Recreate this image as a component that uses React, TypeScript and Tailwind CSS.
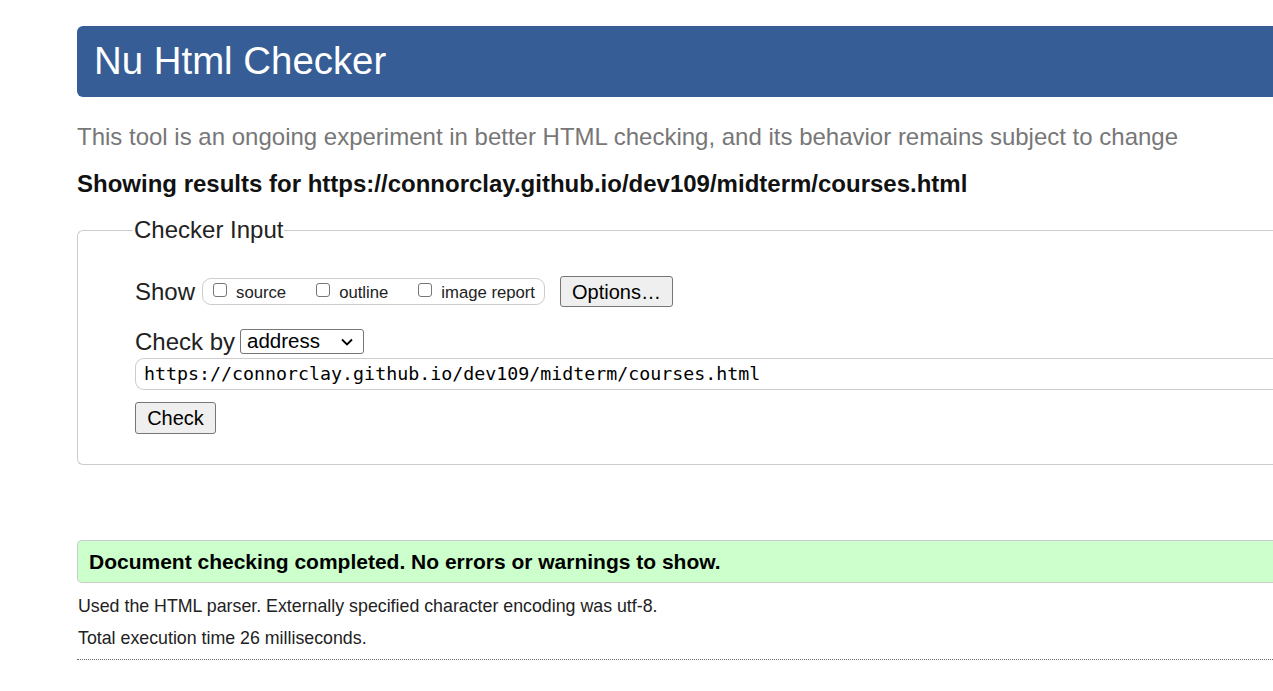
import React from 'react';

const sans = '[font-family:"Liberation_Sans",Arial,sans-serif]';

function Checkbox({ label }: { label: string }) {
  return (
    <label className="flex items-center">
      <span className="mb-[6px] block h-[14px] w-[14px] rounded-[3px] border border-[#767676] bg-white" />
      <span className="ml-[9px] text-[16.7px] leading-none text-[#222]">{label}</span>
    </label>
  );
}

export default function App() {
  return (
    <div className={`min-h-screen w-screen overflow-hidden bg-white text-[#111] ${sans}`}>
      <div className="ml-[77px] w-[1300px] pt-[26px]">
        <header className="flex h-[71px] items-center rounded-l-[6px] bg-[#365d95] pl-[17px]">
          <h1 className="text-[38.4px] font-normal leading-none text-white">Nu Html Checker</h1>
        </header>

        <p className="mt-[28px] text-[24px] leading-none text-[#777]">
          This tool is an ongoing experiment in better HTML checking, and its behavior remains subject to change
        </p>
        <p className="mt-[23px] text-[24px] font-bold leading-none text-[#111]">
          Showing results for https://connorclay.github.io/dev109/midterm/courses.html
        </p>

        <fieldset className="mt-[22px] rounded-l-[6px] border border-r-0 border-[#ccc] pb-[30px]">
          <legend className="ml-[55px] px-[1px] text-[24px] leading-none text-[#222]">Checker Input</legend>

          <div className="pl-[57px]">
            <div className="mt-[34px] flex items-center">
              <span className="text-[24px] leading-none text-[#222]">Show</span>
              <div className="ml-[7px] flex h-[27px] items-center gap-[30px] rounded-[9px] border border-[#ccc] pl-[10px] pr-[9px] pt-[3px]">
                <Checkbox label="source" />
                <Checkbox label="outline" />
                <Checkbox label="image report" />
              </div>
              <button className="ml-[15px] h-[31px] w-[113px] rounded-[3px] border border-[#767676] bg-[#efefef] text-[20px] leading-none text-black">
                Options…
              </button>
            </div>

            <div className="mt-[22px] flex items-center">
              <span className="text-[24px] leading-none text-[#222]">Check by</span>
              <div className="ml-[5px] flex h-[25px] w-[124px] items-center justify-between rounded-[3px] border border-[#767676] bg-white pl-[6px] pr-[10px]">
                <span className="text-[20.5px] leading-none text-black">address</span>
                <svg width="12" height="8" viewBox="0 0 12 8" fill="none" stroke="#000" strokeWidth="1.8">
                  <path d="M1 1.5 6 6.5 11 1.5" />
                </svg>
              </div>
            </div>

            <div className="mt-[4px] flex h-[32px] items-center rounded-l-[9px] border border-r-0 border-[#ccc] pl-[8px]">
              <span className='text-[18.3px] leading-none text-black [font-family:"DejaVu_Sans_Mono",monospace]'>
                https://connorclay.github.io/dev109/midterm/courses.html
              </span>
            </div>

            <button className="mt-[12px] h-[32px] w-[81px] rounded-[3px] border border-[#767676] bg-[#efefef] text-[20px] leading-none text-black">
              Check
            </button>
          </div>
        </fieldset>

        <div className="mt-[75px] flex h-[43px] items-center rounded-l-[5px] border border-r-0 border-[#ccc] bg-[#ccffcc] pl-[11px]">
          <span className="text-[21px] font-bold leading-none text-black">
            Document checking completed. No errors or warnings to show.
          </span>
        </div>

        <p className="mt-[15px] pl-[1px] text-[17.8px] leading-none text-[#222]">
          Used the HTML parser. Externally specified character encoding was utf-8.
        </p>
        <p className="mt-[14px] pl-[1px] text-[17.8px] leading-none text-[#222]">Total execution time 26 milliseconds.</p>
        <hr className="mt-[11px] border-0 border-t border-dotted border-[#666]" />
      </div>
    </div>
  );
}
